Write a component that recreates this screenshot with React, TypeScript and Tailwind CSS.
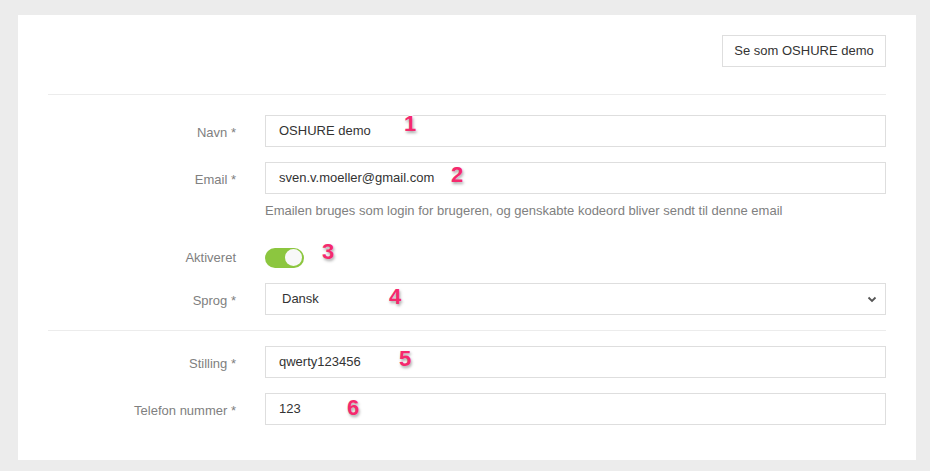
import React from "react";

function Marker({ n, className }: { n: string; className: string }) {
  return (
    <span
      className={`absolute text-[22px] font-bold leading-none text-[#f5296e] ${className}`}
      style={{
        WebkitTextStroke: "1.5px #ffffff",
        paintOrder: "stroke fill",
        textShadow: "1px 2px 3px rgba(0,0,0,0.35)",
      }}
    >
      {n}
    </span>
  );
}

function Row({
  label,
  children,
  className = "",
}: {
  label: string;
  children: React.ReactNode;
  className?: string;
}) {
  return (
    <div className={`flex items-start ${className}`}>
      <div className="w-[188px] shrink-0 pt-[8px] text-right text-[13px] text-[#808080]">
        {label}
      </div>
      <div className="ml-[29px] flex-1">{children}</div>
    </div>
  );
}

function Input({ value }: { value: string }) {
  return (
    <div className="h-[32px] w-full border border-[#dedede] bg-white px-[13px] text-[13px] leading-[30px] text-[#333]">
      {value}
    </div>
  );
}

export default function App() {
  return (
    <div
      className="relative h-[471px] w-[930px] bg-[#ececec] pl-[18px] pt-[15px]"
      style={{ fontFamily: '"Liberation Sans", Arial, sans-serif' }}
    >
      <div className="h-[445px] w-[898px] bg-white px-[30px] pt-[20px]">
        <div className="flex justify-end">
          <button className="h-[32px] w-[164px] border border-[#dedede] bg-white text-[13px] text-[#333]">
            Se som OSHURE demo
          </button>
        </div>
        <div className="mt-[27px] h-[1px] bg-[#ececec]" />

        <Row label="Navn *" className="mt-[20px]">
          <Input value="OSHURE demo" />
        </Row>
        <Row label="Email *" className="mt-[15px]">
          <Input value="sven.v.moeller@gmail.com" />
          <div className="mt-[7px] text-[13px] text-[#808080]">
            Emailen bruges som login for brugeren, og genskabte kodeord bliver sendt til denne email
          </div>
        </Row>
        <div className="mt-[27px] flex h-[20px] items-center">
          <div className="w-[188px] shrink-0 text-right text-[13px] text-[#808080]">Aktiveret</div>
          <div className="ml-[29px] flex h-[20px] w-[39px] items-center justify-end rounded-full bg-[#8cc63f] pr-[2px]">
            <div className="h-[17px] w-[17px] rounded-full bg-[#f8f8f8]" />
          </div>
        </div>
        <Row label="Sprog *" className="mt-[15px]">
          <div className="flex h-[32px] w-full items-center justify-between border border-[#dedede] bg-white pl-[16px] pr-[8px] text-[13px] text-[#333]">
            <span>Dansk</span>
            <svg width="10" height="8" viewBox="0 0 10 8">
              <path d="M1.5 2.5 L5 6 L8.5 2.5" fill="none" stroke="#555" strokeWidth="1.8" />
            </svg>
          </div>
        </Row>
        <div className="mt-[15px] h-[1px] bg-[#ececec]" />
        <Row label="Stilling *" className="mt-[15px]">
          <Input value="qwerty123456" />
        </Row>
        <Row label="Telefon nummer *" className="mt-[15px]">
          <Input value="123" />
        </Row>
      </div>

      <Marker n="1" className="left-[404px] top-[113px]" />
      <Marker n="2" className="left-[451px] top-[164px]" />
      <Marker n="3" className="left-[322px] top-[241px]" />
      <Marker n="4" className="left-[389px] top-[286px]" />
      <Marker n="5" className="left-[399px] top-[348px]" />
      <Marker n="6" className="left-[347px] top-[397px]" />
    </div>
  );
}
